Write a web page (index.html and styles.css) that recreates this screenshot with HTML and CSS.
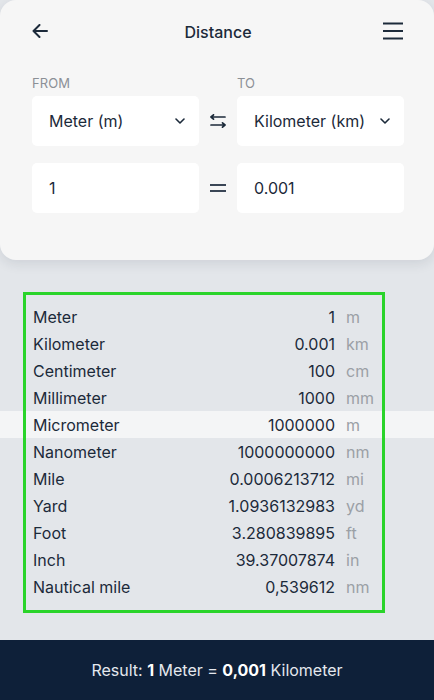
FILE: index.html
```html
<!DOCTYPE html>
<html lang="en">
<head>
<meta charset="utf-8">
<title>Distance</title>
<link rel="stylesheet" href="styles.css">
</head>
<body>
<div class="page">
  <section class="card">
    <header class="header">
      <button class="icon-btn back" aria-label="Back">
        <svg width="16" height="14" viewBox="0 0 16 14" fill="none" stroke="#1c2a3a" stroke-width="2" stroke-linecap="round" stroke-linejoin="round"><path d="M15 7H1.5M7.5 1L1.5 7l6 6"/></svg>
      </button>
      <h1 class="title">Distance</h1>
      <button class="icon-btn menu" aria-label="Menu">
        <svg width="22" height="18" viewBox="0 0 22 18" fill="none" stroke="#1c2a3a" stroke-width="2"><path d="M1 1.5h20M1 9h20M1 16.5h20"/></svg>
      </button>
    </header>

    <div class="converter">
      <div class="label">FROM</div>
      <div></div>
      <div class="label">TO</div>

      <div class="field select">
        <span>Meter (m)</span>
        <svg class="chev" width="10" height="6" viewBox="0 0 10 6" fill="none" stroke="#1c2a3a" stroke-width="1.6" stroke-linecap="round" stroke-linejoin="round"><path d="M1 1l4 4 4-4"/></svg>
      </div>
      <div class="mid mid-select">
        <svg width="18" height="14" viewBox="0 0 18 14" fill="none" stroke="#1c2a3a" stroke-width="1.7" stroke-linecap="round" stroke-linejoin="round"><path d="M16 3H2M4.5 0.8L2 3l2.5 2.2M2 11h14M13.5 8.8L16 11l-2.5 2.2"/></svg>
      </div>
      <div class="field select">
        <span>Kilometer (km)</span>
        <svg class="chev" width="10" height="6" viewBox="0 0 10 6" fill="none" stroke="#1c2a3a" stroke-width="1.6" stroke-linecap="round" stroke-linejoin="round"><path d="M1 1l4 4 4-4"/></svg>
      </div>

      <div class="field input">1</div>
      <div class="mid mid-input">
        <svg width="18" height="10" viewBox="0 0 18 10" fill="none" stroke="#3a4656" stroke-width="1.8"><path d="M1 2h16M1 8h16"/></svg>
      </div>
      <div class="field input">0.001</div>
    </div>
  </section>

  <section class="list">
    <div class="row"><span class="name">Meter</span><span class="val">1</span><span class="unit">m</span></div>
    <div class="row"><span class="name">Kilometer</span><span class="val">0.001</span><span class="unit">km</span></div>
    <div class="row"><span class="name">Centimeter</span><span class="val">100</span><span class="unit">cm</span></div>
    <div class="row"><span class="name">Millimeter</span><span class="val">1000</span><span class="unit">mm</span></div>
    <div class="row active"><span class="name">Micrometer</span><span class="val">1000000</span><span class="unit">m</span></div>
    <div class="row"><span class="name">Nanometer</span><span class="val">1000000000</span><span class="unit">nm</span></div>
    <div class="row"><span class="name">Mile</span><span class="val">0.0006213712</span><span class="unit">mi</span></div>
    <div class="row"><span class="name">Yard</span><span class="val">1.0936132983</span><span class="unit">yd</span></div>
    <div class="row"><span class="name">Foot</span><span class="val">3.280839895</span><span class="unit">ft</span></div>
    <div class="row"><span class="name">Inch</span><span class="val">39.37007874</span><span class="unit">in</span></div>
    <div class="row"><span class="name">Nautical mile</span><span class="val">0,539612</span><span class="unit">nm</span></div>
  </section>

  <footer class="footer">Result: <b>1</b> Meter = <b>0,001</b> Kilometer</footer>
</div>
</body>
</html>
```

FILE: styles.css
```css
* { box-sizing: border-box; }

html, body {
  margin: 0;
  padding: 0;
}

body {
  background: #e3e6ea;
  font-family: Inter, "Noto Sans", "Liberation Sans", sans-serif;
  color: #1c2a3a;
  overflow: hidden;
}

.page {
  min-height: 100vh;
  display: flex;
  flex-direction: column;
}

.card {
  background: #f6f6f6;
  border-radius: 16px;
  height: 260px;
  box-shadow: 0 4px 12px rgba(30, 40, 60, 0.10);
  padding: 0 30px 0 32px;
}

.header {
  height: 64px;
  display: flex;
  align-items: center;
  justify-content: space-between;
}

.icon-btn {
  background: none;
  border: 0;
  padding: 0;
  display: flex;
  align-items: center;
  cursor: pointer;
}

.back { width: 60px; margin-top: -2px; }
.menu { width: 60px; justify-content: flex-end; margin-top: -2px; }

.title {
  margin: 0;
  font-size: 16px;
  font-weight: 500;
  color: #1c2a3a;
}

.converter {
  display: grid;
  grid-template-columns: 167px 38px 167px;
  grid-template-rows: 16px 55px 67px;
  margin-top: 11px;
}

.label {
  font-size: 13px;
  line-height: 16px;
  color: #8c9096;
  letter-spacing: 0.1px;
}

.field {
  background: #ffffff;
  border-radius: 5px;
  height: 50px;
  display: flex;
  align-items: center;
  padding: 0 17px;
  font-size: 16px;
  color: #1c2a3a;
}

.select {
  margin-top: 5px;
  justify-content: space-between;
  padding-right: 14px;
}

.input {
  margin-top: 17px;
}

.mid {
  display: flex;
  align-items: center;
  justify-content: center;
}

.mid-select { padding-top: 5px; }
.mid-input { padding-top: 17px; }

.chev { flex: none; }

.list {
  position: relative;
  margin: 32px 49px 0 23px;
  padding: 11px 3px 13px 10px;
}

.list::after {
  content: "";
  position: absolute;
  inset: 0;
  border: 3px solid #2ad42a;
  pointer-events: none;
  z-index: 2;
}

.row {
  display: grid;
  grid-template-columns: 1fr auto 36px;
  column-gap: 11px;
  height: 27px;
  align-items: center;
  font-size: 16px;
}

.row.active {
  background: #f4f5f6;
  box-shadow: 0 0 0 100vmax #f4f5f6;
  clip-path: inset(0 -100vmax);
  position: relative;
  z-index: 1;
}

.name { color: #1c2a3a; }
.val { text-align: right; color: #1c2a3a; }
.unit { color: #9ba0a6; }

.footer {
  margin-top: auto;
  height: 60px;
  line-height: 60px;
  background: #0e2039;
  color: #e4e8ee;
  font-size: 16px;
  text-align: center;
}

.footer b { font-weight: 700; color: #ffffff; }
```
